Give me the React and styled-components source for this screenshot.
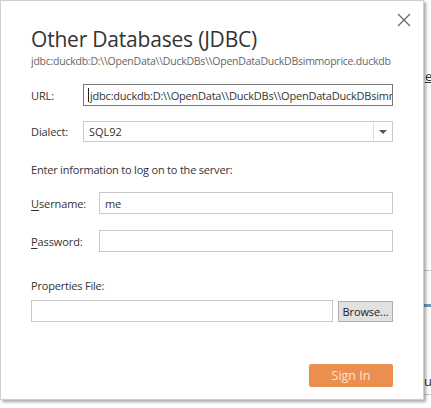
import React from "react";
import styled, { createGlobalStyle } from "styled-components";

const Global = createGlobalStyle`
  html, body { margin: 0; padding: 0; background: #ffffff; }
  body { font-family: "Open Sans", "Noto Sans", sans-serif; color: #333; }
  * { box-sizing: border-box; }
`;

const Page = styled.div`
  display: flex;
  width: 431px;
  height: 408px;
  overflow: hidden;
`;

const Dialog = styled.div`
  position: relative;
  z-index: 1;
  flex: 0 0 424px;
  width: 424px;
  min-width: 0;
  height: 400px;
  background: #fff;
  border: 1px solid #cfcfcf;
  box-shadow: 2px 2px 3px rgba(0, 0, 0, 0.35);
  padding: 23px 30px 0 30px;
  display: flex;
  flex-direction: column;
`;

const Close = styled.button`
  position: absolute;
  top: 12px;
  right: 12px;
  width: 14px;
  height: 14px;
  padding: 0;
  border: none;
  background: none;
  display: flex;
`;

const Title = styled.h1`
  margin: 0;
  font-size: 21px;
  line-height: 30px;
  font-weight: 400;
  color: #333;
  letter-spacing: -0.2px;
`;

const Subtitle = styled.div`
  font-size: 10.5px;
  line-height: 14px;
  color: #666;
  white-space: nowrap;
  overflow: hidden;
  letter-spacing: -0.24px;
`;

const Row = styled.div`
  display: grid;
  grid-template-columns: ${(p) => p.$label}px minmax(0, 1fr);
  align-items: center;
  margin-top: ${(p) => p.$top}px;
`;

const Label = styled.label`
  font-size: 11px;
  color: #333;
  letter-spacing: -0.1px;
  u { text-decoration: underline; text-underline-offset: 2px; }
`;

const Text = styled.div`
  font-size: 11px;
  line-height: 16px;
  color: #333;
  margin-top: ${(p) => p.$top}px;
  letter-spacing: -0.2px;
`;

const Field = styled.div`
  height: ${(p) => p.$h || 22}px;
  min-width: 0;
  border: 1px solid ${(p) => (p.$focus ? "#7a7a7a" : "#c9c9c9")};
  background: #fff;
  font-size: 11px;
  color: #333;
  padding: 0 5px 0 ${(p) => (p.$focus ? 4 : 5)}px;
  display: flex;
  align-items: center;
  white-space: nowrap;
  overflow: hidden;
  letter-spacing: -0.22px;
  flex: 1;
`;

const Caret = styled.span`
  display: inline-block;
  flex: 0 0 1px;
  width: 1px;
  height: 14px;
  background: #222;
  margin-right: 1px;
`;

const Select = styled.div`
  height: 21px;
  border: 1px solid #c9c9c9;
  display: flex;
  align-items: stretch;
  font-size: 11px;
  color: #333;
`;

const SelectValue = styled.div`
  flex: 1;
  padding: 0 5px;
  display: flex;
  align-items: center;
`;

const SelectArrow = styled.div`
  width: 19px;
  border-left: 1px solid #dedede;
  display: flex;
  align-items: center;
  justify-content: center;
`;

const FileRow = styled.div`
  display: flex;
  align-items: center;
  gap: 5px;
  margin-top: 6px;
`;

const Browse = styled.button`
  flex: 0 0 55px;
  height: 21px;
  width: 55px;
  padding: 0;
  border: 1px solid #adadad;
  background: #e1e1e1;
  font-family: inherit;
  font-size: 11px;
  color: #222;
  letter-spacing: -0.1px;
`;

const Footer = styled.div`
  display: flex;
  justify-content: flex-end;
  margin-top: 42px;
`;

const SignIn = styled.button`
  width: 84px;
  height: 23px;
  border: none;
  border-radius: 2px;
  background: #eb8f50;
  color: #fde3cf;
  font-family: inherit;
  font-size: 12.5px;
  padding: 0;
`;

const Back = styled.div`
  flex: 1;
  display: flex;
  flex-direction: column;
  font-family: "Open Sans", sans-serif;
  font-size: 13px;
  color: #333;
  padding-top: 68px;
`;

const BackLink = styled.div`
  text-decoration: underline;
  line-height: 17px;
  padding-left: 1px;
`;

const BackRule = styled.div`
  height: ${(p) => p.$h}px;
  background: ${(p) => p.$c};
  margin-top: ${(p) => p.$top}px;
`;

const BackText = styled.div`
  line-height: 17px;
  margin-top: ${(p) => p.$top}px;
`;

const url = "jdbc:duckdb:D:\\\\OpenData\\\\DuckDBs\\\\OpenDataDuckDBsimmoprice.duckdb";

export default function App() {
  return (
    <Page>
      <Global />
      <Dialog>
        <Close aria-label="Close">
          <svg width="14" height="14" viewBox="0 0 14 14">
            <path d="M1 1 L13 13 M13 1 L1 13" stroke="#666" strokeWidth="1.2" fill="none" />
          </svg>
        </Close>
        <Title>Other Databases (JDBC)</Title>
        <Subtitle>{url}</Subtitle>
        <Row $label={52} $top={16}>
          <Label>URL:</Label>
          <Field $focus>
            <Caret />
            {url}
          </Field>
        </Row>
        <Row $label={52} $top={15}>
          <Label>Dialect:</Label>
          <Select>
            <SelectValue>SQL92</SelectValue>
            <SelectArrow>
              <svg width="8" height="4" viewBox="0 0 8 4">
                <path d="M0 0 H8 L4 4 Z" fill="#555" />
              </svg>
            </SelectArrow>
          </Select>
        </Row>
        <Text $top={20}>Enter information to log on to the server:</Text>
        <Row $label={68} $top={14}>
          <Label>
            <u>U</u>sername:
          </Label>
          <Field>me</Field>
        </Row>
        <Row $label={68} $top={16}>
          <Label>
            <u>P</u>assword:
          </Label>
          <Field />
        </Row>
        <Text $top={26}>Properties File:</Text>
        <FileRow>
          <Field />
          <Browse>Browse...</Browse>
        </FileRow>
        <Footer>
          <SignIn>Sign In</SignIn>
        </Footer>
      </Dialog>
      <Back>
        <BackLink>e</BackLink>
        <BackRule $h={1} $c="#c8c8c8" $top={185} />
        <BackRule $h={3} $c="#6e9cc4" $top={33} />
        <BackText $top={66}>u</BackText>
        <BackRule $h={1} $c="#c8c8c8" $top={4} />
      </Back>
    </Page>
  );
}
